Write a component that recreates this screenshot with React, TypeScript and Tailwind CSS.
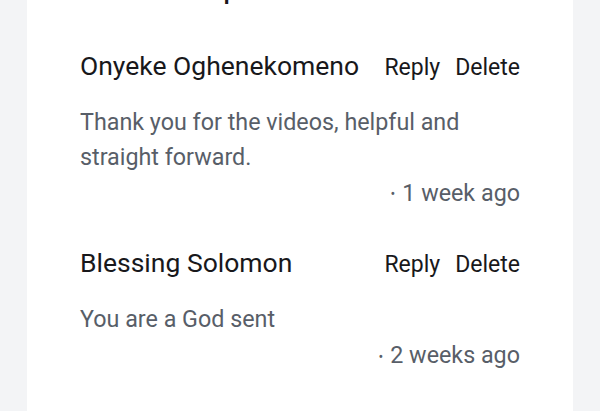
import React from 'react';

interface Comment {
  id: number;
  author: string;
  body: string;
  time: string;
}

const COMMENTS: Comment[] = [
  { id: 1, author: 'Onyeke Oghenekomeno', body: 'Thank you for the videos, helpful and straight forward.', time: '1 week ago' },
  { id: 2, author: 'Blessing Solomon', body: 'You are a God sent', time: '2 weeks ago' },
];

const CommentItem: React.FC<{ c: Comment }> = ({ c }) => (
  <div className="flex flex-col">
    <div className="flex items-baseline justify-between h-[36px]">
      <span className="text-[26.5px] leading-[36px] text-[#18181b]">{c.author}</span>
      <div className="flex items-baseline gap-[15px] text-[23px] leading-[36px] text-[#18181b]">
        <button>Reply</button>
        <button>Delete</button>
      </div>
    </div>
    <p className="mt-[21px] pr-[30px] text-[23.3px] leading-[35px] text-[#585e68]">{c.body}</p>
    <p className="mt-[1px] text-right text-[23.3px] leading-[35px] text-[#585e68]">
      <span className="mr-[7px] text-[14px] align-middle">•</span>
      {c.time}
    </p>
  </div>
);

export default function App() {
  return (
    <div className="min-h-screen bg-[#f3f4f6] font-['Roboto',sans-serif]">
      <div className="mx-[27px] h-[411px] overflow-hidden bg-white px-[53px]">
        <h2 className="mt-[-30px] h-[40px] text-[26px] font-medium leading-[40px] text-[#18181b]">Comment replies</h2>
        <div className="mt-[38px] flex flex-col gap-[33px]">
          {COMMENTS.map(c => (
            <CommentItem key={c.id} c={c} />
          ))}
        </div>
      </div>
    </div>
  );
}
